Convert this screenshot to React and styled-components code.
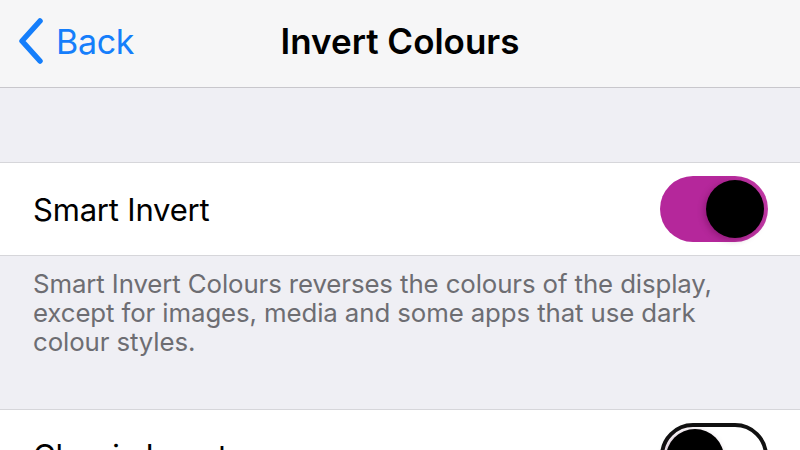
import styled, { createGlobalStyle } from "styled-components";

const GlobalStyle = createGlobalStyle`
  html, body {
    margin: 0;
    padding: 0;
    background: #efeff4;
    overflow: hidden;
  }
  body {
    font-family: Inter, "Liberation Sans", sans-serif;
    -webkit-font-smoothing: antialiased;
  }
`;

const Screen = styled.div`
  width: 800px;
  height: 450px;
  overflow: hidden;
  background: #efeff4;
`;

const NavBar = styled.header`
  height: 88px;
  padding-bottom: 5px;
  box-sizing: border-box;
  display: grid;
  grid-template-columns: 1fr auto 1fr;
  align-items: center;
  background: #f6f6f7;
  border-bottom: 1px solid #c8c7cc;
`;

const BackButton = styled.div`
  display: flex;
  align-items: center;
  gap: 12px;
  padding-left: 18px;
  color: #157efb;
  font-size: 34px;
  letter-spacing: -0.3px;
`;

const Title = styled.h1`
  margin: 0;
  font-size: 35px;
  font-weight: 600;
  color: #000;
  letter-spacing: 0;
`;

const Spacer = styled.div`
  height: 74px;
`;

const Group = styled.section`
  background: #fff;
  border-top: 1px solid #d6d6da;
  border-bottom: 1px solid #d6d6da;
`;

const Row = styled.div`
  height: 92px;
  display: flex;
  align-items: ${({ $align }) => $align || "center"};
  justify-content: space-between;
  padding: 0 32px 0 33px;
  font-size: 31px;
  color: #000;
  letter-spacing: -0.2px;
`;

const Footnote = styled.p`
  margin: 0;
  padding: 13px 0 0 33px;
  height: 153px;
  box-sizing: border-box;
  font-size: 25.8px;
  line-height: 29px;
  color: #6d6d72;
  letter-spacing: -0.1px;
  white-space: nowrap;
`;

const Track = styled.div`
  position: relative;
  width: 108px;
  height: 66px;
  border-radius: 33px;
  box-sizing: border-box;
  background: ${({ $on }) =>
    $on ? "linear-gradient(90deg, #b5279b 55%, #c23aa6 100%)" : "#fff"};
  border: ${({ $on }) => ($on ? "none" : "4px solid #111")};
  flex-shrink: 0;
`;

const Knob = styled.div`
  position: absolute;
  top: ${({ $on }) => ($on ? 4 : 2)}px;
  ${({ $on }) => ($on ? "right: 4px;" : "left: 2px;")}
  width: 58px;
  height: 58px;
  border-radius: 50%;
  background: #000;
  box-shadow: -2px 2px 6px rgba(80, 0, 60, 0.35);
`;

const Label = styled.span`
  padding-top: ${({ $top }) => $top || 0}px;
`;

const SwitchSlot = styled.div`
  padding-top: ${({ $top }) => $top || 0}px;
`;

function Switch({ on }) {
  return (
    <Track $on={on}>
      <Knob $on={on} />
    </Track>
  );
}

export default function App() {
  return (
    <Screen>
      <GlobalStyle />
      <NavBar>
        <BackButton>
          <svg width="26" height="46" viewBox="0 0 26 46">
            <path
              d="M22 3 L4 23 L22 43"
              fill="none"
              stroke="#157efb"
              strokeWidth="5.5"
              strokeLinecap="round"
              strokeLinejoin="round"
            />
          </svg>
          Back
        </BackButton>
        <Title>Invert Colours</Title>
        <div />
      </NavBar>
      <Spacer />
      <Group>
        <Row>
          Smart Invert
          <Switch on />
        </Row>
      </Group>
      <Footnote>
        Smart Invert Colours reverses the colours of the display,
        <br />
        except for images, media and some apps that use dark
        <br />
        colour styles.
      </Footnote>
      <Group>
        <Row $align="flex-start">
          <Label $top={27}>Classic Invert</Label>
          <SwitchSlot $top={13}>
            <Switch />
          </SwitchSlot>
        </Row>
      </Group>
    </Screen>
  );
}
